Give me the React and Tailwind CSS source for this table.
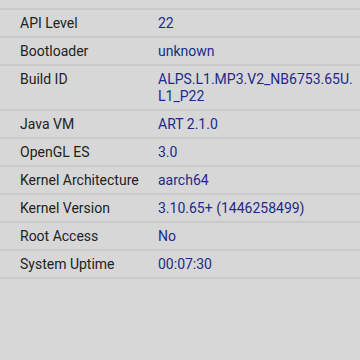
import React from 'react';

const rows = [
  ['Android Version', '5.1'],
  ['API Level', '22'],
  ['Bootloader', 'unknown'],
  ['Build ID', <>ALPS.L1.MP3.V2_NB6753.65U.<wbr />L1_P22</>],
  ['Java VM', 'ART 2.1.0'],
  ['OpenGL ES', '3.0'],
  ['Kernel Architecture', 'aarch64'],
  ['Kernel Version', '3.10.65+ (1446258499)'],
  ['Root Access', 'No'],
  ['System Uptime', '00:07:30'],
];

const App = () => {
  return (
    <div
      className="w-[360px] h-[360px] overflow-hidden bg-[#d7d7d7]"
      style={{ fontFamily: 'Roboto, "Liberation Sans", sans-serif' }}
    >
      <div className="-mt-[18px] flex flex-col">
        {rows.map(([label, value], i) => (
          <div
            key={i}
            className="flex items-start pt-[5px] pb-[4px] border-b-2 border-[#c9c9c9] text-[14px] leading-[17px]"
          >
            <div className="w-[158px] shrink-0 pl-5 text-[#222222]">{label}</div>
            <div className="flex-1 pr-2 text-[#1c2a8c]">{value}</div>
          </div>
        ))}
      </div>
    </div>
  );
};

export default App;
